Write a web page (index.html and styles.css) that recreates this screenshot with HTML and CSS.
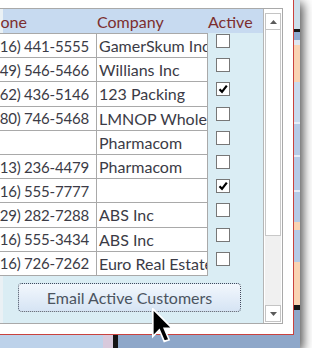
FILE: index.html
```html
<!DOCTYPE html>
<html lang="en">
<head>
  <meta charset="UTF-8">
  <title>Customers</title>
  <link rel="stylesheet" href="styles.css">
</head>
<body>

  <div class="shot">
    <div class="desk">
      <div class="window">
        <div class="form">
          <div class="edge"></div>

          <div class="pane">
            <div class="head">
              <div class="h-phone">Phone</div>
              <div class="h-company">Company</div>
              <div class="h-active">Active</div>
            </div>

            <div class="rows">
              <div class="row">
                <div class="cell phone">(916) 441-5555</div>
                <div class="cell company">GamerSkum Inc</div>
                <div class="check"></div>
              </div>
              <div class="row">
                <div class="cell phone">(949) 546-5466</div>
                <div class="cell company">Willians Inc</div>
                <div class="check"></div>
              </div>
              <div class="row">
                <div class="cell phone">(562) 436-5146</div>
                <div class="cell company">123 Packing</div>
                <div class="check on"><svg viewBox="0 0 12 12"><path d="M2.5 6.2 L5 8.8 L9.8 2.6"/></svg></div>
              </div>
              <div class="row">
                <div class="cell phone">(480) 746-5468</div>
                <div class="cell company">LMNOP Wholesale</div>
                <div class="check"></div>
              </div>
              <div class="row">
                <div class="cell phone"></div>
                <div class="cell company">Pharmacom</div>
                <div class="check"></div>
              </div>
              <div class="row">
                <div class="cell phone">(213) 236-4479</div>
                <div class="cell company">Pharmacom</div>
                <div class="check"></div>
              </div>
              <div class="row">
                <div class="cell phone">(916) 555-7777</div>
                <div class="cell company"></div>
                <div class="check on"><svg viewBox="0 0 12 12"><path d="M2.5 6.2 L5 8.8 L9.8 2.6"/></svg></div>
              </div>
              <div class="row">
                <div class="cell phone">(929) 282-7288</div>
                <div class="cell company">ABS Inc</div>
                <div class="check"></div>
              </div>
              <div class="row">
                <div class="cell phone">(916) 555-3434</div>
                <div class="cell company">ABS Inc</div>
                <div class="check"></div>
              </div>
              <div class="row">
                <div class="cell phone">(916) 726-7262</div>
                <div class="cell company">Euro Real Estate</div>
                <div class="check"></div>
              </div>
            </div>

            <button class="btn">Email Active Customers</button>
          </div>

          <div class="scroll">
            <div class="arrow"><svg width="7" height="4" viewBox="0 0 7 4"><path d="M0 4 L3.5 0 L7 4 Z"/></svg></div>
            <div class="thumb"></div>
            <div class="track"></div>
            <div class="arrow"><svg width="7" height="4" viewBox="0 0 7 4"><path d="M0 0 L7 0 L3.5 4 Z"/></svg></div>
          </div>
        </div>
      </div>
      <div class="side"></div>
    </div>
    <div class="taskbar"></div>
  </div>

  <!-- mouse pointer over the button -->
  <svg class="pointer" width="22" height="35" viewBox="0 0 13.5 21.5">
    <path d="M0.5 0.5 L0.5 17.5 L4.5 13.5 L7.5 20.5 L10.5 19.5 L7.5 12.5 L12.5 12.5 Z"/>
  </svg>

</body>
</html>
```

FILE: styles.css
```css
body {
  margin: 0;
  background: #fff;
  font-family: Lato, "Liberation Sans", sans-serif;
}
.shot {
  position: relative;
  width: 300px;
  height: 348px;
  overflow: hidden;
  box-shadow: 3px 3px 10px rgba(0, 0, 0, 0.7);
}
.desk {
  display: flex;
  height: 335px;
}
.window {
  box-sizing: border-box;
  width: 294px;
  height: 335px;
  padding-top: 8px;
  background: #fff;
  border-right: 1px solid #c9423e;
  border-bottom: 1px solid #c9423e;
}
.side {
  flex: 1;
  background: linear-gradient(to bottom,
    #cddfeb 0 29px, #151515 29px 32px, #8ea9cf 32px 40px, #dfe7f1 40px 45px,
    #fad3b3 45px 82px, #c9dbef 82px 122px, #e6eef8 122px 124px, #b6cbe7 124px 155px,
    #e6eef8 155px 157px, #b6cbe7 157px 190px, #e6eef8 190px 192px, #b6cbe7 192px 222px,
    #fad3b3 222px 230px, #b6cbe7 230px 262px, #fad3b3 262px 305px, #151515 305px 310px,
    #8ea7c9 310px);
}
.taskbar {
  height: 13px;
  background: linear-gradient(to right,
    #bdd2ea 0 103px, #d8c9dc 103px 113px, #151515 113px 118px, #8ea7c9 118px);
}

/* form with the continuous list */
.form {
  box-sizing: border-box;
  width: 283px;
  height: 316px;
  display: flex;
  border-top: 1px solid #a9a9a9;
  border-right: 1px solid #a9a9a9;
  border-bottom: 1px solid #a9a9a9;
}
.edge {
  width: 3px;
  background: #eaf1f5;
}
.pane {
  width: 260px;
  display: flex;
  flex-direction: column;
  background: #daedf4;
}
.head {
  display: flex;
  align-items: center;
  height: 24px;
  background: #c7daf0;
  color: #7c2e2e;
  font-size: 16px;
  white-space: nowrap;
}
.h-phone {
  margin-left: -21px;
  width: 115px;
}
.h-company {
  width: 111px;
}
.rows {
  display: flex;
  flex-direction: column;
}
.row {
  display: flex;
  height: 24.2px;
  color: #3b3b46;
  font-size: 16px;
}
.row:first-child {
  height: 25.2px;
}
.cell {
  box-sizing: border-box;
  height: 100%;
  background: #fff;
  border-right: 1px solid #a9a9a9;
  border-bottom: 1px solid #a9a9a9;
  white-space: nowrap;
  overflow: hidden;
  display: flex;
  align-items: center;
}
.row:first-child .cell {
  border-top: 1px solid #a9a9a9;
}
.phone {
  margin-left: -17px;
  width: 111px;
  justify-content: flex-end;
  padding-right: 7px;
  font-size: 15px;
  letter-spacing: -0.2px;
}
.company {
  width: 111px;
  padding-left: 2px;
}
.check {
  box-sizing: border-box;
  width: 14px;
  height: 14px;
  margin-left: 8px;
  border: 1px solid #777;
  background: #fff;
}
.row:first-child .check {
  margin-top: 1px;
}
.check svg {
  display: block;
  width: 12px;
  height: 12px;
}
.check path {
  fill: none;
  stroke: #000;
  stroke-width: 2.2;
}
.btn {
  box-sizing: border-box;
  margin: 7px 0 0 15px;
  width: 223px;
  height: 29px;
  padding: 0;
  border: 1px dotted #3f4b5b;
  border-radius: 4px;
  background: linear-gradient(#f2f7fd, #d6e4f4);
  color: #4b5460;
  font-family: Lato, "Liberation Sans", sans-serif;
  font-size: 16px;
}

/* vertical scrollbar */
.scroll {
  box-sizing: border-box;
  width: 19px;
  padding: 4px 1px 1px;
  display: flex;
  flex-direction: column;
  background: #fff;
  border-left: 1px solid #b5b5b5;
}
.arrow {
  box-sizing: border-box;
  height: 17px;
  display: flex;
  align-items: center;
  justify-content: center;
  border: 1px solid #c4c4c4;
  background: #fff;
}
.arrow path {
  fill: #5a5a5a;
}
.thumb {
  box-sizing: border-box;
  height: 206px;
  border: 1px solid #c8c8c8;
  border-top: none;
  background: #fff;
}
.track {
  flex: 1;
  background: #f0f0f0;
}

.pointer {
  position: absolute;
  left: 152px;
  top: 308px;
}
.pointer path {
  fill: #000;
  stroke: #fff;
  stroke-width: 1;
}
```
